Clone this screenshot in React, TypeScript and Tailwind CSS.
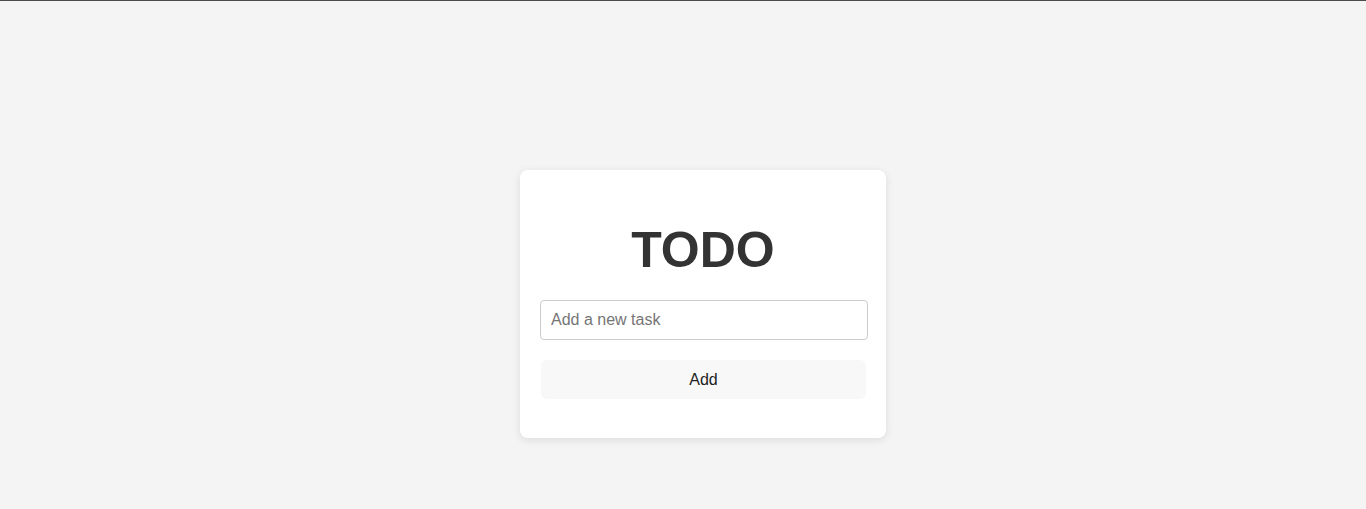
export default function App() {
  return (
    <div className="min-h-[509px] bg-[#f4f4f4] border-t border-[#4a4a4a] font-['Liberation_Sans',Arial,sans-serif] flex flex-col items-center pl-10">
      <div className="mt-[169px] w-[366px] bg-white rounded-lg shadow-[0_2px_8px_rgba(0,0,0,0.1)] px-5 pt-5 pb-[39px]">
        <h1 className="mt-[30px] mb-[20px] text-center text-[50px] leading-[60px] font-bold text-[#333]">TODO</h1>
        <input
          type="text"
          placeholder="Add a new task"
          className="block w-[328px] h-10 px-[10px] text-base text-[#333] placeholder:text-[#757575] border border-[#ccc] rounded outline-none"
        />
        <button className="mt-5 ml-px block w-[325px] h-[39px] rounded-md bg-[#f8f8f8] text-base text-[#222]">
          Add
        </button>
      </div>
    </div>
  );
}
